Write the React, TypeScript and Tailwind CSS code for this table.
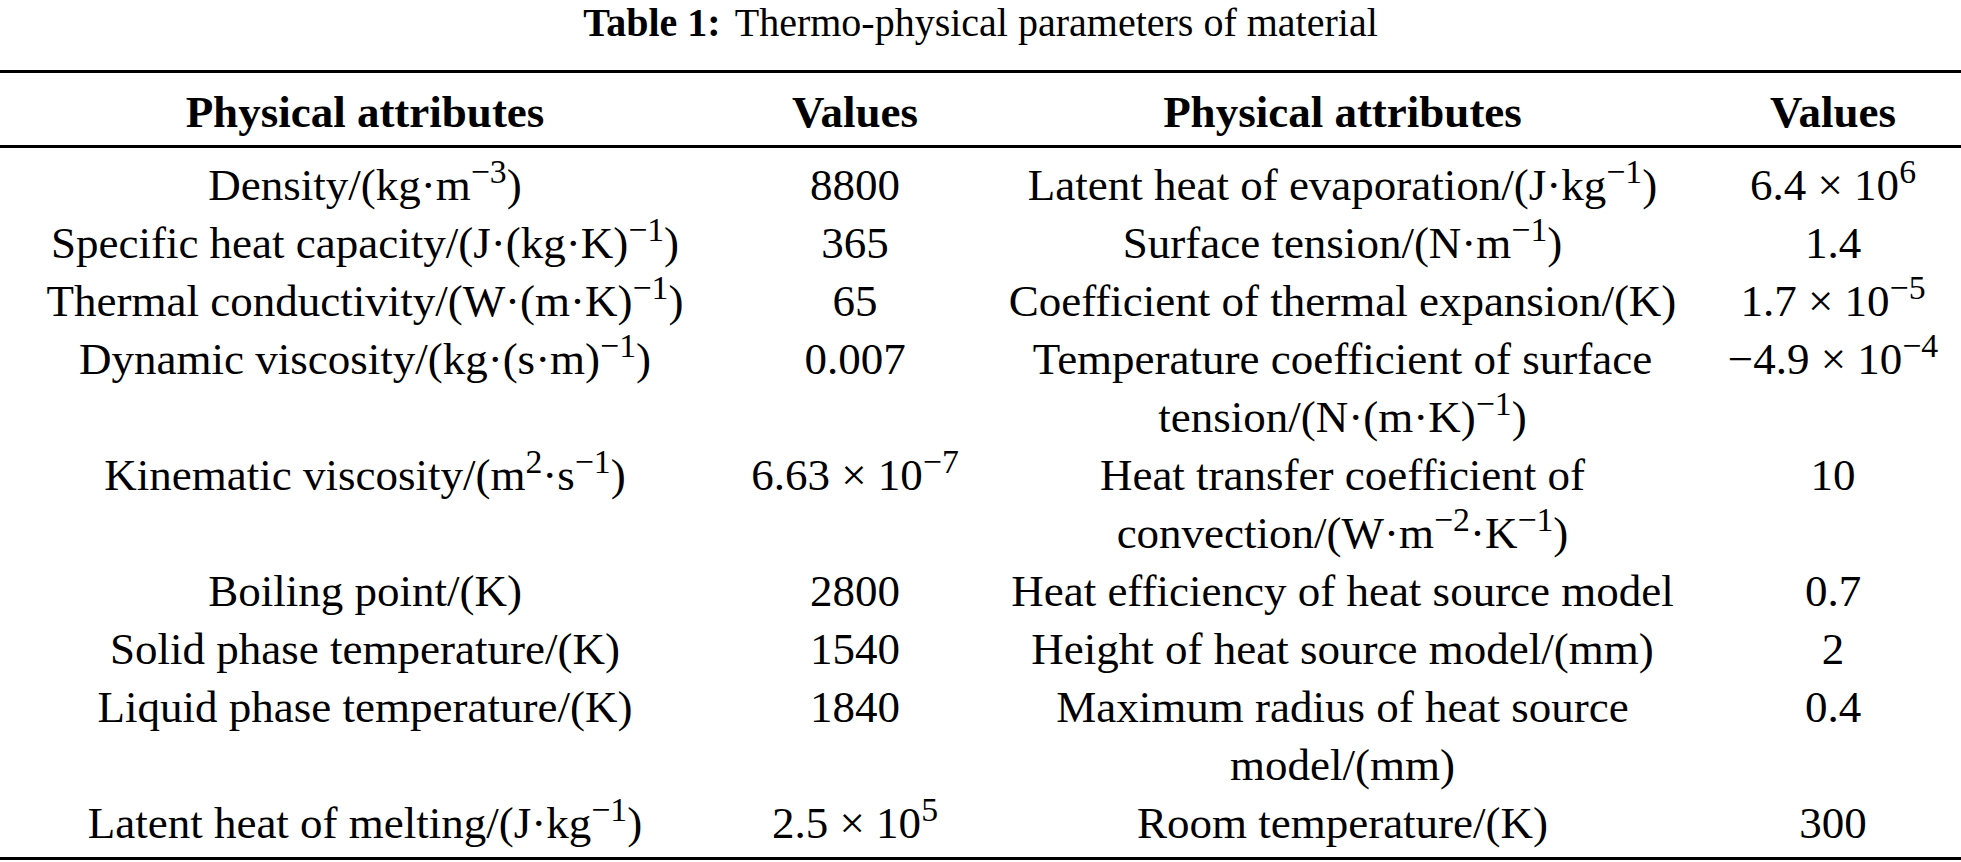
import React from 'react';

type Row = [React.ReactNode, React.ReactNode, React.ReactNode, React.ReactNode];

const rows: Row[] = [
  [
    <>Density/(kg·m<sup>−3</sup>)</>,
    '8800',
    <>Latent heat of evaporation/(J·kg<sup>−1</sup>)</>,
    <>6.4 × 10<sup>6</sup></>,
  ],
  [
    <>Specific heat capacity/(J·(kg·K)<sup>−1</sup>)</>,
    '365',
    <>Surface tension/(N·m<sup>−1</sup>)</>,
    '1.4',
  ],
  [
    <>Thermal conductivity/(W·(m·K)<sup>−1</sup>)</>,
    '65',
    'Coefficient of thermal expansion/(K)',
    <>1.7 × 10<sup>−5</sup></>,
  ],
  [
    <>Dynamic viscosity/(kg·(s·m)<sup>−1</sup>)</>,
    '0.007',
    <>
      Temperature coefficient of surface
      <br />
      tension/(N·(m·K)<sup>−1</sup>)
    </>,
    <>−4.9 × 10<sup>−4</sup></>,
  ],
  [
    <>Kinematic viscosity/(m<sup>2</sup>·s<sup>−1</sup>)</>,
    <>6.63 × 10<sup>−7</sup></>,
    <>
      Heat transfer coefficient of
      <br />
      convection/(W·m<sup>−2</sup>·K<sup>−1</sup>)
    </>,
    '10',
  ],
  ['Boiling point/(K)', '2800', 'Heat efficiency of heat source model', '0.7'],
  ['Solid phase temperature/(K)', '1540', 'Height of heat source model/(mm)', '2'],
  [
    'Liquid phase temperature/(K)',
    '1840',
    <>
      Maximum radius of heat source
      <br />
      model/(mm)
    </>,
    '0.4',
  ],
  [
    <>Latent heat of melting/(J·kg<sup>−1</sup>)</>,
    <>2.5 × 10<sup>5</sup></>,
    'Room temperature/(K)',
    '300',
  ],
];

const cols = 'grid grid-cols-[730px_250px_725px_256px]';

export default function App() {
  return (
    <div className="w-[1961px] h-[862px] bg-white text-black font-['Liberation_Serif',serif] overflow-hidden">
      <div className="text-center text-[40px] leading-[46px]">
        <span className="font-bold">Table 1:</span>
        <span className="ml-[14px]">Thermo-physical parameters of material</span>
      </div>

      <div className="mt-[24px] h-[3px] bg-black" />

      <div className={`${cols} text-[45px] leading-[58px] font-bold text-center pt-[10px] pb-[4px]`}>
        <div>Physical attributes</div>
        <div>Values</div>
        <div>Physical attributes</div>
        <div>Values</div>
      </div>

      <div className="h-[3px] bg-black" />

      <div className="pt-[8px] pb-[5px] text-[45px] leading-[58px]">
        {rows.map((row, i) => (
          <div key={i} className={`${cols} text-center whitespace-nowrap`}>
            {row.map((cell, j) => (
              <div key={j}>{cell}</div>
            ))}
          </div>
        ))}
      </div>

      <div className="h-[3px] bg-black" />
    </div>
  );
}
